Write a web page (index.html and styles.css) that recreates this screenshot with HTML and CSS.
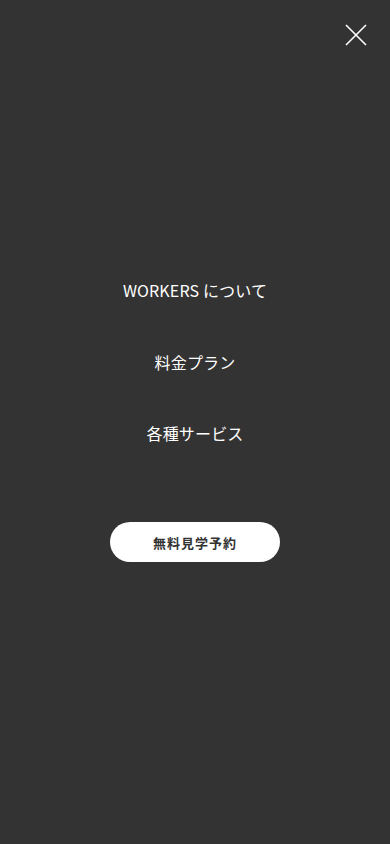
FILE: index.html
```html
<!DOCTYPE html>
<html lang="ja">
<head>
<meta charset="utf-8">
<meta name="viewport" content="width=device-width, initial-scale=1">
<link rel="stylesheet" href="styles.css">
</head>
<body>
<div class="menu">
  <button class="close" aria-label="閉じる">
    <svg width="22" height="22" viewBox="0 0 22 22"><path d="M1 1L21 21M21 1L1 21" stroke="#fff" stroke-width="1.6" fill="none"/></svg>
  </button>
  <nav class="nav">
    <a class="nav-item" href="#">WORKERS について</a>
    <a class="nav-item" href="#">料金プラン</a>
    <a class="nav-item" href="#">各種サービス</a>
  </nav>
  <a class="cta" href="#">無料見学予約</a>
</div>
</body>
</html>
```
FILE: styles.css
```css
html, body {
  margin: 0;
  padding: 0;
  background: #333333;
}
body {
  font-family: "Noto Sans CJK JP", "Noto Sans", sans-serif;
  color: #fff;
}
.menu {
  position: relative;
  height: 844px;
  display: flex;
  flex-direction: column;
  align-items: center;
  padding-top: 278px;
  box-sizing: border-box;
}
.close {
  position: absolute;
  top: 24px;
  right: 23px;
  width: 22px;
  height: 22px;
  padding: 0;
  border: 0;
  background: none;
  display: flex;
}
.nav {
  display: flex;
  flex-direction: column;
  align-items: center;
  gap: 47.5px;
}
.nav-item {
  color: #fff;
  text-decoration: none;
  font-size: 16px;
  line-height: 24px;
  letter-spacing: 0.01em;
}
.cta {
  margin-top: 77px;
  width: 170px;
  height: 40px;
  border-radius: 20px;
  background: #fff;
  color: #333;
  font-size: 13px;
  font-weight: 700;
  display: flex;
  align-items: center;
  justify-content: center;
  text-decoration: none;
  letter-spacing: 0.08em;
}
```
